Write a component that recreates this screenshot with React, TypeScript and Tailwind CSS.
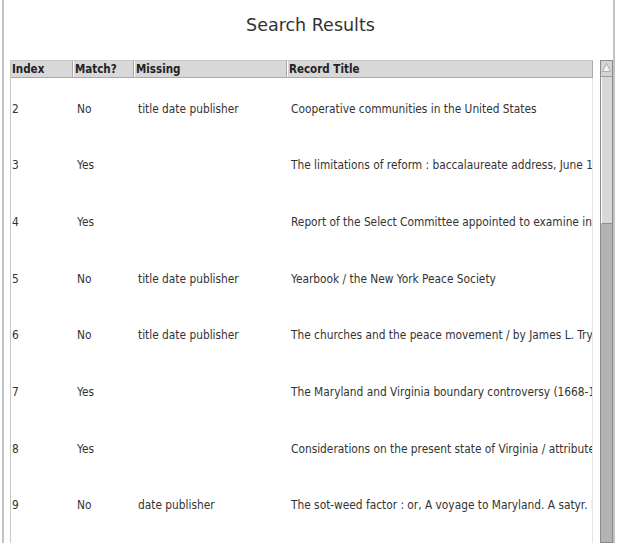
import React from "react"

const rows = [
  { index: "2", match: "No", missing: "title date publisher", title: "Cooperative communities in the United States" },
  { index: "3", match: "Yes", missing: "", title: "The limitations of reform : baccalaureate address, June 1904" },
  { index: "4", match: "Yes", missing: "", title: "Report of the Select Committee appointed to examine into the" },
  { index: "5", match: "No", missing: "title date publisher", title: "Yearbook / the New York Peace Society" },
  { index: "6", match: "No", missing: "title date publisher", title: "The churches and the peace movement / by James L. Tryon" },
  { index: "7", match: "Yes", missing: "", title: "The Maryland and Virginia boundary controversy (1668-1894)" },
  { index: "8", match: "Yes", missing: "", title: "Considerations on the present state of Virginia / attributed to" },
  { index: "9", match: "No", missing: "date publisher", title: "The sot-weed factor : or, A voyage to Maryland. A satyr. In which" },
]

export default function App() {
  return (
    <div className="w-[620px] h-[543px] bg-white overflow-hidden flex font-['DejaVu_Sans_Condensed','DejaVu_Sans',sans-serif] text-[#333]">
      <div className="w-[2px] shrink-0" />
      <div className="w-[613px] h-full shrink-0 border-l-2 border-r-2 border-[#c2c2c2] flex flex-col">
        <div className="h-[60px] shrink-0 flex justify-center pt-[14px] pl-[4px]">
          <h1 className="text-[17.5px] leading-[22px] text-[#333] font-['DejaVu_Sans',sans-serif]">Search Results</h1>
        </div>
        <div className="flex flex-1 min-h-0">
          <div className="w-[6px] shrink-0" />
          <div className="w-[583px] shrink-0 flex flex-col border-l border-t border-[#c8c8c8] overflow-hidden">
            <div className="flex h-[17px] shrink-0 bg-[#d8d8d8] border-b border-[#a9a9a9] text-[11.5px] leading-[16px] font-bold text-[#222]">
              <div className="w-[62px] pl-[1px] border-r border-[#a9a9a9]">Index</div>
              <div className="w-[61px] pl-[1px] border-r border-[#a9a9a9] border-l border-l-white">Match?</div>
              <div className="w-[153px] pl-[1px] border-r border-[#a9a9a9] border-l border-l-white">Missing</div>
              <div className="flex-1 pl-[1px] border-l border-l-white border-r border-[#a9a9a9]">Record Title</div>
            </div>
            <div className="flex-1 flex flex-col pt-[3px] border-r border-[#e4e4e4] text-[11.8px]">
              {rows.map((r) => (
                <div key={r.index} className="h-[56.7px] shrink-0 flex items-center whitespace-nowrap">
                  <div className="w-[62px] pl-[1px]">{r.index}</div>
                  <div className="w-[61px] pl-[4px]">{r.match}</div>
                  <div className="w-[153px] pl-[4px]">{r.missing}</div>
                  <div className="flex-1 pl-[4px] overflow-hidden">{r.title}</div>
                </div>
              ))}
            </div>
          </div>
          <div className="w-[7px] shrink-0" />
          <div className="w-[13px] shrink-0 flex flex-col bg-[#b3b3b3] border border-[#8c8c8c]">
            <div className="h-[16px] shrink-0 bg-[#d4d4d4] border-b border-[#9a9a9a] flex items-start justify-center pt-[2px]">
              <svg width="9" height="9" viewBox="0 0 9 9">
                <polygon points="4.5,0.5 8.5,8.5 0.5,8.5" fill="#f4f4f4" stroke="#a0a0a0" strokeWidth="0.8" />
              </svg>
            </div>
            <div className="h-[147px] shrink-0 bg-[#d8d8d8] border-b border-[#8f8f8f] border-l border-l-white" />
            <div className="flex-1" />
          </div>
        </div>
      </div>
      <div className="flex-1 bg-white" />
    </div>
  )
}
